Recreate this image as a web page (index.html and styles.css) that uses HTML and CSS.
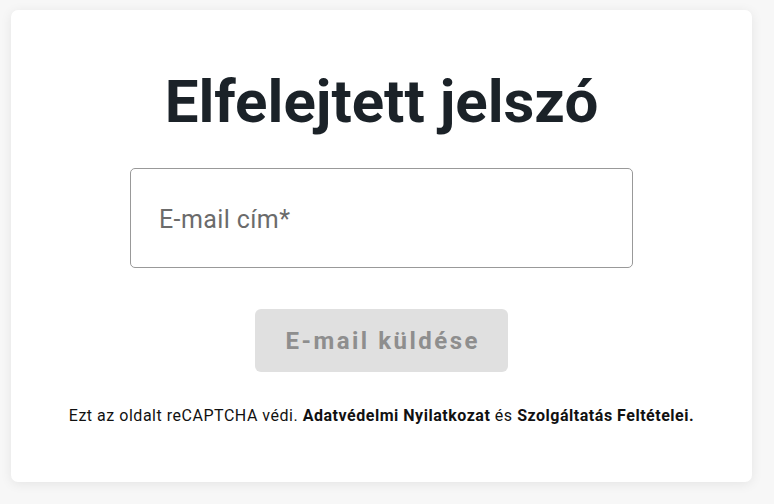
FILE: index.html
```html
<!DOCTYPE html>
<html lang="hu">
<head>
    <meta charset="UTF-8">
    <meta name="viewport" content="width=device-width, initial-scale=1.0">
    <title>Elfelejtett jelszó</title>
    <link rel="stylesheet" href="styles.css">
</head>
<body>

<main class="card">
    <h1 class="title">Elfelejtett jelszó</h1>

    <form id="reset-form" class="reset-form">
        <input type="email" class="email-input" placeholder="E-mail cím*" required>
        <button type="submit" class="send-button" disabled>E-mail küldése</button>
    </form>

    <p class="recaptcha-note">
        Ezt az oldalt reCAPTCHA védi. <b>Adatvédelmi Nyilatkozat</b> és <b>Szolgáltatás Feltételei.</b>
    </p>
</main>

</body>
</html>
```

FILE: styles.css
```css
body {
    font-family: Roboto, "Liberation Sans", sans-serif;
    background-color: #f7f7f7;
    margin: 0;
    padding: 10px 22px 21px 11px;
}
.card {
    background-color: #fff;
    border-radius: 7px;
    box-shadow: 0 2px 12px rgba(0, 0, 0, 0.08);
    padding: 66px 20px 57px;
    text-align: center;
}
.title {
    margin: 0;
    font-size: 60px;
    font-weight: 700;
    line-height: 52px;
    color: #1b2228;
}
.reset-form {
    display: flex;
    flex-direction: column;
    align-items: center;
    margin-top: 40px;
}
.email-input {
    box-sizing: border-box;
    width: 503px;
    height: 100px;
    padding: 3px 28px 0;
    border: 1px solid #999;
    border-radius: 5px;
    font-family: inherit;
    font-size: 25px;
    letter-spacing: 0.4px;
    color: #333;
}
.email-input::placeholder {
    color: #6b6b6b;
}
.send-button {
    margin-top: 41px;
    width: 253px;
    height: 63px;
    padding: 0 0 0 2.5px;
    border: none;
    border-radius: 6px;
    background-color: #e0e0e0;
    color: #8e8e8e;
    font-family: inherit;
    font-size: 24px;
    font-weight: 700;
    letter-spacing: 2.5px;
}
.recaptcha-note {
    margin: 34px 0 0;
    font-size: 16px;
    letter-spacing: 0.52px;
    color: #111;
}
.recaptcha-note b {
    font-weight: 700;
}
```
